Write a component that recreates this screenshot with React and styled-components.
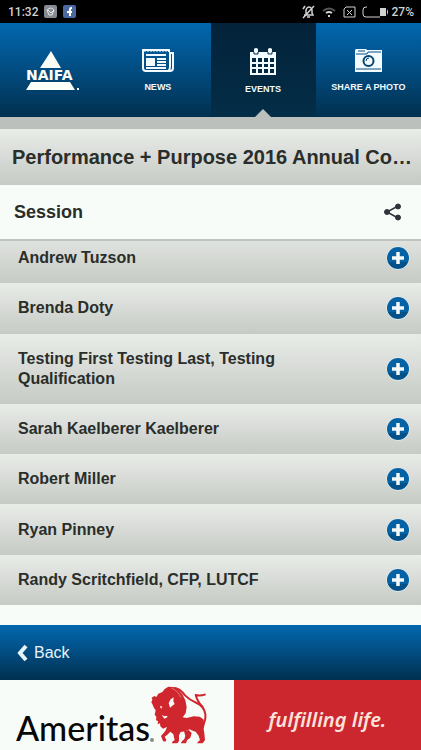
import React from "react";
import styled, { createGlobalStyle } from "styled-components";

const GlobalStyle = createGlobalStyle`
  * { box-sizing: border-box; }
  body { margin: 0; background: #f8fcf8; font-family: "Liberation Sans", Arial, sans-serif; color: #2a2e2a; }
  button { font: inherit; color: inherit; border: 0; padding: 0; background: none; cursor: pointer; }
  h1, h2, ul { margin: 0; padding: 0; }
  svg { display: block; flex: none; }
`;

const blue = "linear-gradient(#0267ae, #024f86 45%, #01304f)";
const silver = "linear-gradient(#e9ede8, #d9dcd8 45%, #c6cbc5)";

const Screen = styled.div`
  display: flex;
  flex-direction: column;
  min-height: 100vh;
`;
const StatusBar = styled.div`
  display: flex;
  align-items: center;
  justify-content: space-between;
  height: 23px;
  padding: 0 7px 0 8px;
  background: #000;
  color: #d2d2d2;
  font: 500 12px Roboto, sans-serif;
`;
const StatusGroup = styled.div`
  display: flex;
  align-items: center;
  gap: ${(p) => p.$gap}px;
`;
const Nav = styled.nav`
  display: grid;
  grid-template-columns: repeat(4, 1fr);
  height: 94px;
  background: ${blue};
`;
const Tab = styled.button`
  position: relative;
  display: flex;
  flex-direction: column;
  align-items: center;
  justify-content: center;
  gap: 8px;
  padding-top: 2px;
  background: ${(p) => (p.$active ? "linear-gradient(#03233a, #042d47)" : "none")};
  color: #f2fbff;
  font-size: 9px;
  font-weight: 700;
  line-height: 12px;
  white-space: nowrap;
`;
const Pointer = styled.span`
  position: absolute;
  bottom: 0;
  left: 50%;
  margin-left: -8px;
  border: solid transparent;
  border-width: 0 8px 8px;
  border-bottom-color: #bcc0bd;
`;
const Strip = styled.div`
  height: 12px;
  background: #bcc0bd;
`;
const TitleBar = styled.header`
  height: 56px;
  padding: 0 8px 0 12px;
  background: ${silver};
`;
const Title = styled.h1`
  font-size: 20px;
  line-height: 56px;
  overflow: hidden;
  white-space: nowrap;
  text-overflow: ellipsis;
`;
const SectionBar = styled.div`
  display: flex;
  align-items: center;
  justify-content: space-between;
  height: 56px;
  padding: 0 19px 0 14px;
  border-bottom: 2px solid #bfc3bf;
`;
const SectionTitle = styled.h2`
  font-size: 18px;
  line-height: 24px;
`;
const SpeakerList = styled.ul`
  display: flex;
  flex-direction: column;
  flex: 1;
  margin-bottom: 20px;
  list-style: none;
`;
const SpeakerRow = styled.li`
  display: flex;
  align-items: center;
  justify-content: space-between;
  flex: 1 0 auto;
  padding: 15px 11px 15px 18px;
  background: ${silver};
  &:first-child {
    padding-top: 7px;
    background: linear-gradient(#dfe2de, #c6cbc5);
  }
`;
const SpeakerName = styled.span`
  max-width: 290px;
  font-size: 16px;
  font-weight: 700;
  line-height: 20px;
`;
const AddButton = styled.button`
  width: 24px;
  height: 24px;
  margin: -2px 0;
  border-radius: 50%;
`;
const BackBar = styled.footer`
  display: flex;
  align-items: center;
  height: 55px;
  padding: 0 17px;
  background: ${blue};
`;
const BackButton = styled.button`
  display: flex;
  align-items: center;
  gap: 6px;
  color: #e6f4fc;
  font-size: 16px;
  line-height: 20px;
`;
const Banner = styled.a`
  display: grid;
  grid-template-columns: 5fr 4fr;
  height: 70px;
  text-decoration: none;
  overflow: hidden;
`;
const Sponsor = styled.span`
  display: flex;
  align-items: flex-end;
  padding: 0 0 6px 16px;
  color: #080808;
  font: 500 34px/32px Lato, sans-serif;
`;
const Registered = styled.span`
  width: 4px;
  height: 4px;
  margin: 0 -4px 2px 0;
  border-radius: 50%;
  background: #8b8b8b;
`;
const Slogan = styled.span`
  display: flex;
  align-items: center;
  justify-content: center;
  padding-top: 8px;
  background: #cc262e;
  color: #fbe3dc;
  font: italic 600 20px "Noto Sans", sans-serif;
`;

const NaifaLogo = () => (
  <svg width="54" height="40" viewBox="0 0 54 40" fill="#fbfff8" role="img" aria-label="NAIFA">
    <path d="M25 0 35 17H14ZM5 31H44L49 39H0ZM51 37h2v2h-2Z" />
    <text x="0" y="29" fontFamily="DejaVu Sans, sans-serif" fontSize="14" fontWeight="700">NAIFA</text>
  </svg>
);

const NewsIcon = () => (
  <svg width="32" height="24" viewBox="0 0 32 24" fill="none" stroke="#f2fbff">
    <path d="M27 3V1H1v18q0 3 3 3h24q3 0 3-3V4h-3v14q0 3-2 4" strokeWidth="2" />
    <path d="M2 1h25" strokeWidth="3" strokeDasharray="2 1" />
    <path d="M4 6h20M15 10h9M15 13h9M15 16h9M4 19h20" strokeWidth="2" />
    <path d="M4 9h9v8H4Z" fill="#f2fbff" stroke="none" />
  </svg>
);

const CalendarIcon = () => (
  <svg width="26" height="27" viewBox="0 0 26 27" fill="#f2fbff">
    <path fillRule="evenodd" d="M0 4h4V1q2-2 4 0v3h10V1q2-2 4 0v3h4v23H0ZM2 10v4h4v-4ZM8 10v4h4v-4ZM14 10v4h4v-4ZM20 10v4h4v-4ZM2 16v3h4v-3ZM8 16v3h4v-3ZM14 16v3h4v-3ZM20 16v3h4v-3ZM2 21v4h4v-4ZM8 21v4h4v-4ZM14 21v4h4v-4ZM20 21v4h4v-4Z" />
    <path d="M4 4v2h4V4M18 4v2h4V4" stroke="#042d47" fill="none" />
  </svg>
);

const CameraIcon = () => (
  <svg width="27" height="24" viewBox="0 0 27 24">
    <path d="M1 0h10l1 1h15v22H0V1Z" fill="#f2fbff" />
    <path d="M3 2h7M1 5h11l1-2h13" fill="none" stroke="#075083" />
    <path d="M1 20h25" stroke="#075083" />
    <circle cx="13.500" cy="12" r="5" fill="none" stroke="#05446f" strokeWidth="2" />
    <path d="M11 12q0-3 3-3" fill="none" stroke="#05446f" />
  </svg>
);

const ShareIcon = () => (
  <svg width="18" height="18" viewBox="0 0 18 18" fill="#30343a" stroke="#30343a">
    <path d="M14 3 3 9l11 6" fill="none" strokeWidth="1.500" />
    <circle cx="14" cy="3.500" r="2.500" />
    <circle cx="3" cy="9" r="2.500" />
    <circle cx="14" cy="14.500" r="2.500" />
  </svg>
);

const PlusIcon = () => (
  <svg width="24" height="24" viewBox="0 0 24 24">
    <circle cx="12" cy="12" r="11.500" fill="#f0f3ef" />
    <circle cx="12" cy="12" r="11" fill="#0562a5" />
    <path d="M2 16a11 11 0 0 0 20 0Z" fill="#034473" opacity=".55" />
    <path d="M12 6v12M6 12h12" stroke="#f4f8f6" strokeWidth="3.500" />
  </svg>
);

const BackIcon = () => (
  <svg width="11" height="18" viewBox="0 0 11 18" fill="none">
    <path d="M9 2 3 9l6 7" stroke="#e6f4fc" strokeWidth="4" />
  </svg>
);

const Bison = () => (
  <svg width="58" height="58" viewBox="14 9 174 174" fill="#d0262d" aria-hidden="true">
    <path d="M22 65 18 58 21 50 19 44 27 39 33 42 39 32 51 27 58 18 69 11 84 12 99 20 111 34 120 52 124 72 121 91 112 103 124 105 145 100 163 101 174 109 178 123 175 139 177 151 179 171 172 181H155L160 174 164 172 160 158 151 146 138 142 133 139 120 145 106 147 101 157 101 174 96 181H79L83 174 88 172 84 154 75 146 66 155 58 161 63 170 60 176 53 174 47 159 60 144 65 132 53 137 45 130 44 121 37 124 38 114 32 112 33 101 28 95 31 82 26 75Z" />
    <path d="M130 141 139 150 135 164 125 172 122 181H106L111 173 117 169 120 158 116 145Z" />
    <path d="M87 14Q105 17 119 37Q133 51 154 60Q177 70 180 94Q182 111 173 125" fill="none" stroke="#d0262d" strokeWidth="6" />
    <path d="M173 73Q157 58 151 36Q163 40 181 34" fill="none" stroke="#d0262d" strokeWidth="6" strokeLinejoin="round" />
    <path d="M70 60 76 49 85 43 84 55 88 63 80 69 74 74ZM44 68 51 71 47 78ZM49 95 57 100 64 98 67 102 57 107Z" fill="#f8fcf8" />
    <path d="M78 15Q99 24 107 44" fill="none" stroke="#eaa5a0" strokeWidth="2" />
  </svg>
);

const AppBadge = () => (
  <svg width="13" height="13" viewBox="0 0 13 13">
    <rect width="13" height="13" rx="2" fill="#858b91" />
    <path d="M3 5q4-4 7 0L8 10H5ZM4 5l3 3 3-3" fill="none" stroke="#e7e7e7" />
  </svg>
);
const FacebookBadge = () => (
  <svg width="13" height="13" viewBox="0 0 13 13">
    <rect width="13" height="13" rx="2" fill="#4c68a0" />
    <path d="M9 3H8Q7 3 7 5v6M4 7h5" fill="none" stroke="#fff" strokeWidth="2" />
  </svg>
);
const StatusIcons = () => (
  <svg width="78" height="14" viewBox="0 0 78 14" fill="none" stroke="#d2d2d2">
    <path d="M2 10h9l-1-2V5Q9 2 7 2T4 5v4M1 13 12 1M5 12h3M1 4l2-3" strokeWidth="1.500" />
    <path d="M21 6q6-5 12 0" stroke="#555" strokeWidth="2" />
    <path d="M24 8q3-2 6 0M27 10v2" strokeWidth="2" />
    <path d="M44 2h9v10H42V4ZM45 5l5 5m0-5-5 5" />
    <path d="M65 2h-1q-3 0-3 3v4q0 3 3 3h14" />
  </svg>
);
const BatteryEnd = () => (
  <svg width="9" height="14" viewBox="0 0 9 14" fill="#d2d2d2">
    <path d="M0 3h6v8H0ZM7 4q2 3 0 6Z" />
  </svg>
);

const tabs = [
  { label: "NEWS", Icon: NewsIcon },
  { label: "EVENTS", Icon: CalendarIcon, active: true },
  { label: "SHARE A PHOTO", Icon: CameraIcon },
];
const speakers = [
  "Andrew Tuzson",
  "Brenda Doty",
  "Testing First Testing Last, Testing Qualification",
  "Sarah Kaelberer Kaelberer",
  "Robert Miller",
  "Ryan Pinney",
  "Randy Scritchfield, CFP, LUTCF",
];

export default function App() {
  return (
    <Screen>
      <GlobalStyle />
      <StatusBar>
        <StatusGroup $gap={6}>
          <span>11:32</span>
          <AppBadge />
          <FacebookBadge />
        </StatusGroup>
        <StatusGroup $gap={3}>
          <StatusGroup $gap={0}>
            <StatusIcons />
            <BatteryEnd />
          </StatusGroup>
          <span>27%</span>
        </StatusGroup>
      </StatusBar>
      <Nav>
        <Tab aria-label="NAIFA home"><NaifaLogo /></Tab>
        {tabs.map(({ label, Icon, active }) => (
          <Tab key={label} $active={active} aria-current={active ? "page" : undefined}>
            <Icon />
            {label}
            {active && <Pointer />}
          </Tab>
        ))}
      </Nav>
      <Strip />
      <TitleBar><Title>Performance + Purpose 2016 Annual Co…</Title></TitleBar>
      <SectionBar>
        <SectionTitle>Session</SectionTitle>
        <button aria-label="Share"><ShareIcon /></button>
      </SectionBar>
      <SpeakerList>
        {speakers.map((name) => (
          <SpeakerRow key={name}>
            <SpeakerName>{name}</SpeakerName>
            <AddButton aria-label={`Add ${name}`}><PlusIcon /></AddButton>
          </SpeakerRow>
        ))}
      </SpeakerList>
      <BackBar>
        <BackButton><BackIcon />Back</BackButton>
      </BackBar>
      <Banner href="#ameritas">
        <Sponsor>Ameritas<Registered /><Bison /></Sponsor>
        <Slogan>fulfilling life.</Slogan>
      </Banner>
    </Screen>
  );
}
